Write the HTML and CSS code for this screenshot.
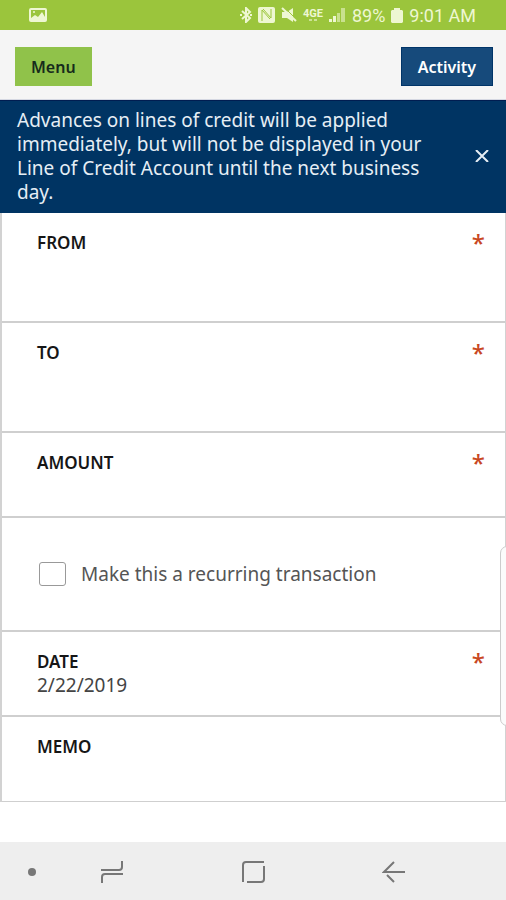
FILE: index.html
```html
<!DOCTYPE html>
<html lang="en">
<head>
<meta charset="utf-8">
<meta name="viewport" content="width=device-width, initial-scale=1">
<title>Transfer</title>
<link rel="stylesheet" href="styles.css">
</head>
<body>
<div class="screen">
  <div class="status">
    <svg width="18" height="14" viewBox="0 0 18 14" aria-hidden="true"><rect x="1" y="1" width="16" height="12" rx="1" fill="none" stroke="currentColor" stroke-width="2"/><path d="M2 10l4-3 3 2 4-5 3 5v3H2z" fill="currentColor"/><circle cx="5" cy="4" r="1" fill="currentColor"/></svg>
    <div class="status-right">
      <svg width="12" height="16" viewBox="0 0 12 16" aria-hidden="true"><path d="M2 4l8 7-4 4V1l4 4-8 7" fill="none" stroke="currentColor" stroke-width="2"/><path d="M0 8h2M10 8h2" stroke="currentColor" stroke-width="2"/></svg>
      <svg width="17" height="16" viewBox="0 0 17 16" aria-hidden="true"><rect width="17" height="16" rx="2" fill="currentColor"/><path d="M4 14V3l8 9M5 2l8 9V2" fill="none" stroke="#9bc53c" stroke-width="1"/></svg>
      <svg width="16" height="16" viewBox="0 0 16 16" aria-hidden="true"><path d="M1 5h5l6-4v14l-6-4H1z" fill="currentColor"/><path d="M3 0l13 13" stroke="#9bc53c" stroke-width="1"/><path d="M1 1l14 13" stroke="currentColor" stroke-width="2"/></svg>
      <span class="network">4GE<span class="network-arrows"></span></span>
      <svg width="17" height="14" viewBox="0 0 17 14" aria-hidden="true"><path d="M0 11h3v3H0zM4 8h3v6H4z" fill="currentColor"/><path d="M8 5h3v9H8zM12 0h4v14h-4z" fill="currentColor" opacity=".55"/></svg>
      <span>89%</span>
      <svg width="12" height="15" viewBox="0 0 12 15" aria-hidden="true"><path d="M3 0h6v2h2l1 1v11l-1 1H1l-1-1V3l1-1h2z" fill="currentColor"/></svg>
      <span>9:01 AM</span>
    </div>
  </div>
  <header class="toolbar">
    <button class="btn btn-menu" type="button">Menu</button>
    <button class="btn btn-activity" type="button">Activity</button>
  </header>
  <div class="notice" role="status">
    <p>Advances on lines of credit will be applied immediately, but will not be displayed in your Line of Credit Account until the next business day.</p>
    <button class="close" type="button" aria-label="Close"><svg width="14" height="12" viewBox="0 0 14 12" aria-hidden="true"><path d="M1 0l12 12M13 0L1 12" stroke="currentColor" stroke-width="2" fill="none"/></svg></button>
  </div>
  <form class="form">
    <div class="field tall">
      <div class="field-head"><label for="from">FROM</label><span class="required">*</span></div>
      <select id="from" required><option></option></select>
    </div>
    <div class="field tall">
      <div class="field-head"><label for="to">TO</label><span class="required">*</span></div>
      <select id="to" required><option></option></select>
    </div>
    <div class="field">
      <div class="field-head"><label for="amount">AMOUNT</label><span class="required">*</span></div>
      <input id="amount" type="text" required>
    </div>
    <div class="field recurring">
      <input id="recurring" type="checkbox"><label for="recurring">Make this a recurring transaction</label>
    </div>
    <div class="field">
      <div class="field-head"><label for="date">DATE</label><span class="required">*</span></div>
      <input id="date" type="text" value="2/22/2019" required>
    </div>
    <div class="field">
      <div class="field-head"><label for="memo">MEMO</label></div>
      <input id="memo" type="text">
    </div>
  </form>
  <nav class="navbar">
    <button type="button" aria-label="Show bar"><svg width="8" height="8" viewBox="0 0 8 8"><circle cx="4" cy="4" r="4" fill="currentColor"/></svg></button>
    <button type="button" aria-label="Recents"><svg width="24" height="24" viewBox="0 0 24 24"><path d="M1 10h18q3 0 3-3V1M23 14H5q-3 0-3 3v6" fill="none" stroke="currentColor" stroke-width="2"/></svg></button>
    <button type="button" aria-label="Home"><svg width="24" height="24" viewBox="0 0 24 24"><path d="M2 22V5q0-3 3-3h18M23 6v13q0 3-3 3H6" fill="none" stroke="currentColor" stroke-width="2"/></svg></button>
    <button type="button" aria-label="Back"><svg width="24" height="24" viewBox="0 0 24 24"><path d="M12 2L2 12h21M5 15l7 7" fill="none" stroke="currentColor" stroke-width="2"/></svg></button>
  </nav>
  <div class="edge-handle"></div>
</div>
</body>
</html>
```

FILE: styles.css
```css
* { box-sizing: border-box; }
body { margin: 0; background: #fff; color: #222; font-family: "Noto Sans", "Open Sans", sans-serif; font-size: 19px; }
button, input, select { font: inherit; }
svg { display: block; }

.screen { position: relative; min-height: 100vh; display: flex; flex-direction: column; overflow: hidden; }

.status { height: 30px; padding: 0 30px 0 29px; display: flex; align-items: center; justify-content: space-between; background: #9bc53c; color: #eef7d2; font-family: Roboto, sans-serif; font-size: 18px; }
.status-right { display: flex; align-items: center; gap: 6px; }
.network { font-size: 11px; font-weight: 700; line-height: 10px; }
.network-arrows { display: block; width: 8px; height: 2px; margin: 0 auto; border: solid currentColor; border-width: 0 3px; opacity: .6; }

.toolbar { height: 70px; padding: 4px 13px 0 15px; display: flex; justify-content: space-between; align-items: center; background: #f5f5f5; border-bottom: 1px solid #d5d8e2; }
.btn { height: 39px; padding: 0 16px; border: 0; font-size: 16px; font-weight: 600; line-height: 36px; }
.btn-menu { background: #90c24a; color: #162b1c; }
.btn-activity { background: #164a7b; color: #fff; border: 1px solid #003468; line-height: 34px; }

.notice { display: flex; align-items: center; justify-content: space-between; padding: 7px 8px 9px 17px; background: #003463; color: #e6eef5; border-top: 1px solid #001d51; }
.notice p { margin: 0; max-width: 420px; line-height: 24px; }
.close { width: 32px; height: 32px; padding: 0; border: 0; background: none; color: inherit; display: grid; place-items: center; }

.form { border: solid #d2d2d2; border-width: 0 1px 0 2px; }
.field { height: 85px; padding: 20px 20px 0 35px; border-bottom: 2px solid #cfcfcf; }
.field.tall { height: 110px; }
.field:last-child { border-bottom-width: 1px; }
.field-head { height: 20px; display: flex; justify-content: space-between; align-items: center; font-size: 17px; font-weight: 600; line-height: 20px; color: #161616; }
.required { color: #c9481f; font-size: 24px; font-weight: 500; }
.field input[type="text"], .field select { display: block; width: 100%; height: 26px; padding: 0; border: 0; outline: 0; background: transparent; color: #444; appearance: none; }
.field.recurring { height: 114px; padding-top: 0; display: flex; align-items: center; gap: 15px; color: #555; }
.recurring input { appearance: none; margin: 0 0 0 2px; width: 27px; height: 24px; border: 1px solid #999; border-radius: 3px; background: #fff; }

.navbar { height: 58px; margin-top: auto; padding-top: 2px; background: #eee; color: #777; display: grid; grid-template-columns: 64px 96px 1fr 96px 64px; align-items: center; }
.navbar button { height: 48px; padding: 0; border: 0; background: none; color: inherit; display: grid; place-items: center; }

.edge-handle { position: absolute; right: -8px; top: 546px; width: 14px; height: 180px; border: 1px solid #ccc; border-radius: 7px; background: #fbfbfb; }
```
